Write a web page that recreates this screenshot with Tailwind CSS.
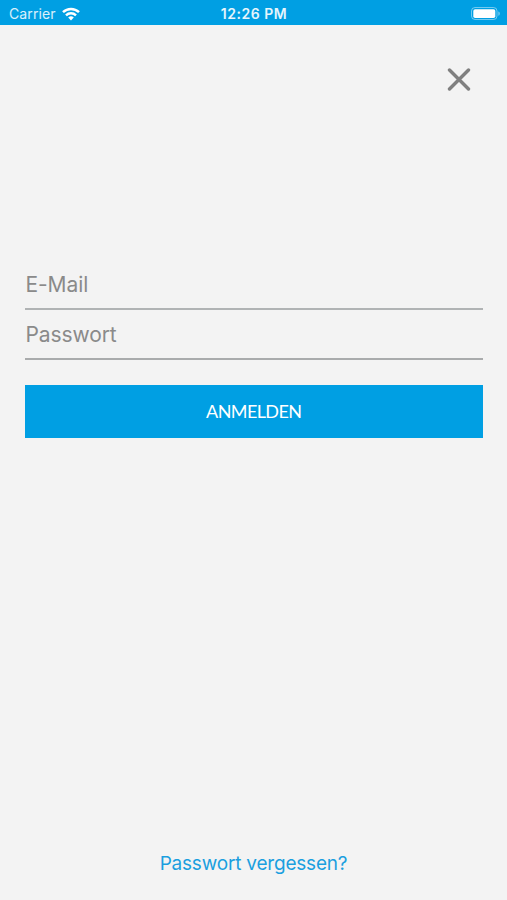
<!DOCTYPE html>
<html lang="de">
<head>
    <meta charset="UTF-8">
    <meta name="viewport" content="width=device-width, initial-scale=1.0">
    <title>Anmelden</title>
    <script src="https://cdn.jsdelivr.net/npm/@tailwindcss/browser@4"></script>
</head>
<body class="bg-[#f3f3f3] h-screen flex flex-col overflow-hidden font-['Inter',sans-serif]">
    <!-- Status bar -->
    <header class="h-[25px] shrink-0 bg-[#009fe3] text-white grid grid-cols-3 items-center pl-[7px] pr-[6px] pt-[2px]">
        <div class="flex items-center gap-[6px] pl-[2px]">
            <span class="text-[14px] leading-none tracking-[0.1px] text-white/85">Carrier</span>
            <svg class="w-[18px] h-[14px]" viewBox="0 0 18 14" fill="none" stroke="currentColor" stroke-width="2.5">
                <path d="M1 5.2a11.6 11.6 0 0 1 16 0"/>
                <path d="M4 8.3a7.3 7.3 0 0 1 10 0"/>
                <path d="M9 13.4 6.2 10.5a4 4 0 0 1 5.6 0z" fill="currentColor" stroke="none"/>
            </svg>
        </div>
        <span class="text-[14px] leading-none tracking-[0.5px] font-semibold text-center text-white/90">12:26 PM</span>
        <svg class="w-[30px] h-[14px] justify-self-end" viewBox="0 0 30 14">
            <rect x=".5" y=".5" width="25.5" height="12" rx="3.5" fill="none" stroke="#fff" stroke-opacity=".45"/>
            <rect x="2.3" y="2.2" width="22" height="8.8" rx="1.8" fill="#fff"/>
            <path d="M27.4 4.4c1.8.6 1.8 3.7 0 4.3z" fill="#fff" fill-opacity=".5"/>
        </svg>
    </header>

    <div class="flex justify-end pt-[43px] pr-[36px]">
        <button type="button" aria-label="Schließen" class="text-[#808080]">
            <svg class="w-[24px] h-[24px]" viewBox="0 0 24 24" fill="none" stroke="currentColor" stroke-width="3.4" stroke-linecap="round">
                <path d="M2.5 2l19 19M21.5 2l-19 19"/>
            </svg>
        </button>
    </div>

    <form class="mt-[168px] ml-[25px] mr-[24.5px] flex flex-col">
        <label class="h-[50px] border-b-2 border-[#b0b3b4] flex items-center pt-px pl-[0.5px] text-[21px] tracking-[-0.1px] text-[#8a8a8a]">
            <span>E-Mail</span>
        </label>
        <label class="h-[50px] border-b-2 border-[#a9abac] flex items-center pt-px pl-[0.5px] text-[21px] tracking-[-0.1px] text-[#8a8a8a]">
            <span>Passwort</span>
        </label>
        <button type="button" class="mt-[24.5px] h-[53.5px] bg-[#009fe3] text-white text-[18px] tracking-[-0.6px] font-['Lato',sans-serif]">ANMELDEN</button>
    </form>

    <a href="#" class="mt-auto mb-[22px] self-center text-[19px] leading-[28px] tracking-[-0.2px] text-[#1b9fdf]">Passwort vergessen?</a>
</body>
</html>
